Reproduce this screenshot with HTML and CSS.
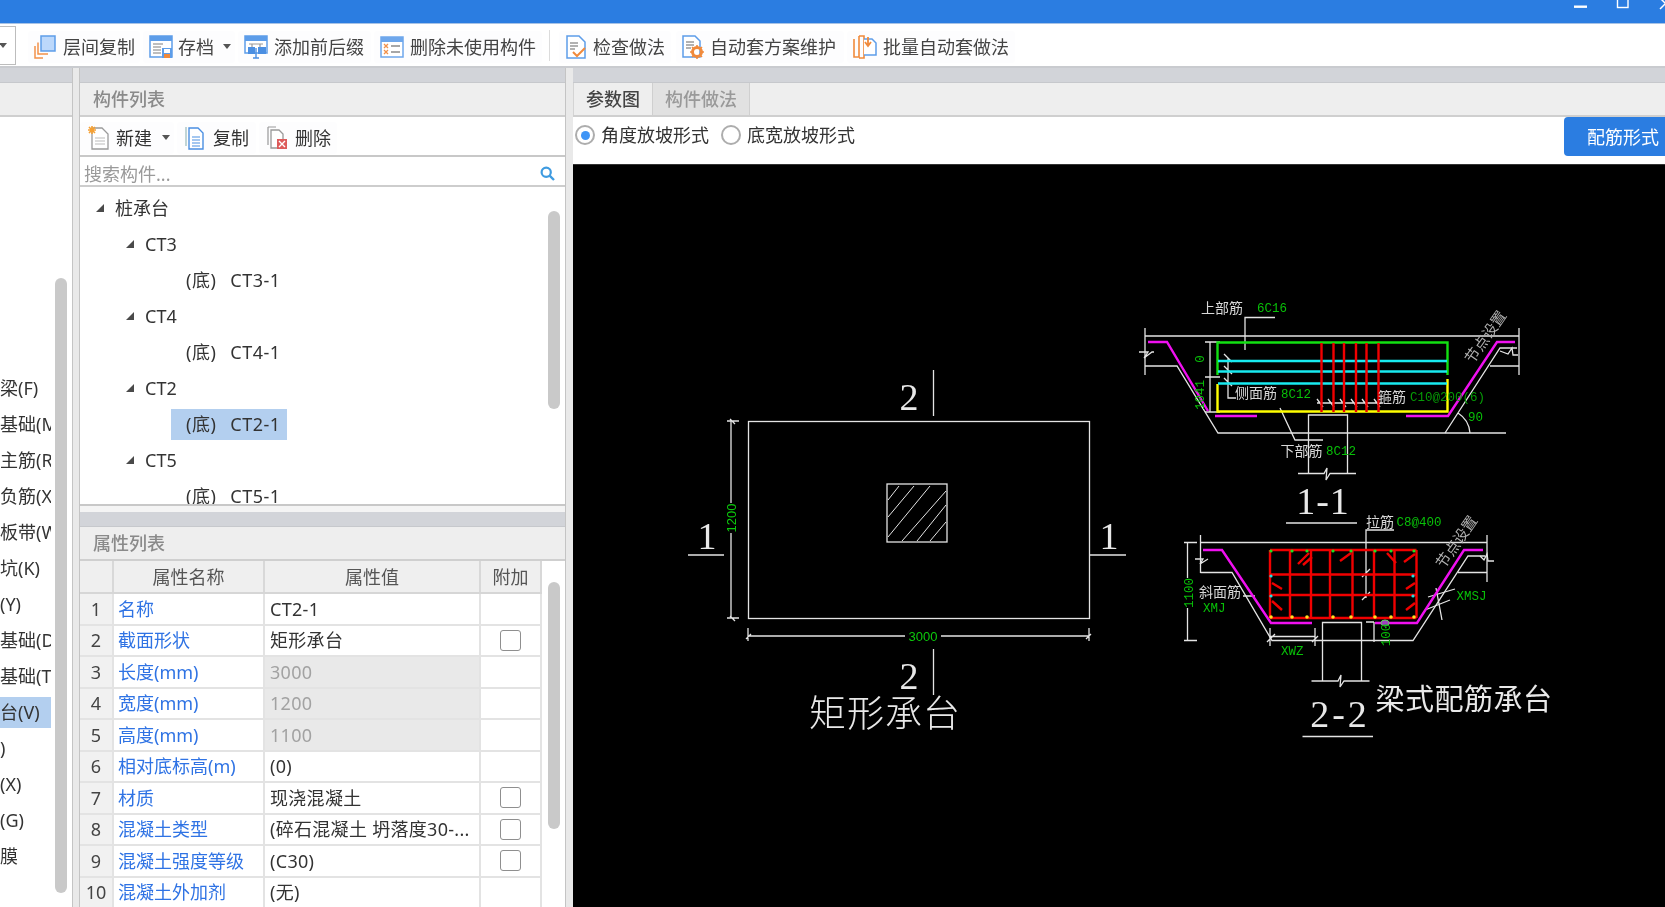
FILE: index.html
```html
<!DOCTYPE html>
<html lang="zh-CN">
<head>
<meta charset="utf-8">
<title>构件列表</title>
<link rel="stylesheet" href="styles.css">
</head>
<body>
<div class="app">
  <header class="titlebar">
    <svg class="winctl" width="100" height="23" viewBox="0 0 100 23">
      <rect x="9" y="5.5" width="13" height="2.4" fill="#fff"/>
      <rect x="52.5" y="-4" width="10.5" height="11.5" fill="none" stroke="#fff" stroke-width="1.4"/>
      <path d="M95 -2L106 9M106 -2L95 9" stroke="#fff" stroke-width="1.5" fill="none"/>
    </svg>
  </header>

  <nav class="toolbar">
    <div class="dropbox"><i class="caret"></i></div>
    <div class="tool tool-first">
      <svg class="ic22" viewBox="0 0 22 24"><path d="M4 7.5V19H14M1 11V23H9" fill="none" stroke="#f2914a" stroke-width="1.5"/><rect x="7" y="1" width="14" height="15" fill="#bcd8fb" stroke="#5d9de9" stroke-width="1.5"/></svg>
      <span>层间复制</span>
    </div>
    <div class="tool tool-save">
      <svg class="ic24" viewBox="0 0 24 24"><rect x="1" y="1" width="22" height="21" fill="#fff" stroke="#5d9de9" stroke-width="1.5"/><rect x="1" y="1" width="22" height="5" fill="#5d9de9"/><path d="M4 9h10M4 12h8M4 15h8M4 18h8" stroke="#a9a9a9" stroke-width="1.3"/><rect x="13" y="13" width="10" height="10" fill="#5d9de9"/><rect x="15" y="14" width="6" height="4" fill="#fff"/><rect x="15" y="19" width="6" height="4" fill="#f08a3c"/></svg>
      <span>存档</span><i class="caret caret-tool"></i>
    </div>
    <div class="tool tool-prefix">
      <svg class="ic24" viewBox="0 0 24 24"><rect x="1" y="1" width="22" height="17" fill="#fff" stroke="#5d9de9" stroke-width="1.5"/><rect x="1" y="1" width="22" height="5" fill="#5d9de9"/><path d="M5 9h14M8 9v3M16 9v3" stroke="#9a9a9a" stroke-width="1.2"/><rect x="4" y="12" width="7" height="7" fill="#4b8fe2"/><rect x="14" y="12" width="8" height="7" fill="#4b8fe2"/><path d="M12 13v10M9 23h6" stroke="#4b8fe2" stroke-width="1.4"/></svg>
      <span>添加前后缀</span>
    </div>
    <div class="tool">
      <svg class="ic24" viewBox="0 0 24 24"><rect x="1" y="2" width="22" height="20" fill="#fff" stroke="#6ea7ec" stroke-width="1.5"/><rect x="1" y="2" width="22" height="5" fill="#6ea7ec"/><path d="M4 9l4 4M8 9l-4 4M4 15l4 4M8 15l-4 4" stroke="#f2914a" stroke-width="1.3"/><path d="M11 11h9M11 17h9" stroke="#8a8a8a" stroke-width="1.3"/></svg>
      <span>删除未使用构件</span>
    </div>
    <div class="toolsep"></div>
    <div class="tool">
      <svg class="ic22" viewBox="0 0 22 24"><path d="M2 1H14L20 7V23H2Z" fill="#fff" stroke="#5d9de9" stroke-width="1.5"/><path d="M5 8h8M5 11h8M5 14h5" stroke="#999" stroke-width="1.3"/><path d="M8 17l4 4 8-8" fill="none" stroke="#f08a3c" stroke-width="2"/></svg>
      <span>检查做法</span>
    </div>
    <div class="tool tool-shift">
      <svg class="ic22" viewBox="0 0 22 24"><path d="M1 1H13L18 6V22H1Z" fill="#fff" stroke="#5d9de9" stroke-width="1.5"/><path d="M4 7h8M4 10h8M4 13h5" stroke="#999" stroke-width="1.3"/><circle cx="15" cy="17" r="4.5" fill="none" stroke="#f08a3c" stroke-width="3"/><path d="M15 10v3M15 21v3M8 17h3M19 17h3M10 12l2 2M18 20l2 2M20 12l-2 2M10 22l2-2" stroke="#f08a3c" stroke-width="1.6"/></svg>
      <span>自动套方案维护</span>
    </div>
    <div class="tool">
      <svg class="ic24" viewBox="0 0 24 24"><path d="M6 1V22H1V4M6 1H11V23H6" fill="none" stroke="#f08a3c" stroke-width="1.6"/><path d="M11 4H19L23 8V20H11" fill="#fff" stroke="#5d9de9" stroke-width="1.5"/><path d="M15 2v8M12 7l3 4 3-4" fill="none" stroke="#f08a3c" stroke-width="1.8"/></svg>
      <span>批量自动套做法</span>
    </div>
  </nav>

  <main class="workspace">
    <aside class="nav">
      <div class="strip"></div>
      <div class="panel-head"></div>
      <div class="nav-body">
        <ul class="nav-list">
          <li>梁(F)</li>
          <li>基础(M)</li>
          <li>主筋(R)</li>
          <li>负筋(X)</li>
          <li>板带(W)</li>
          <li>坑(K)</li>
          <li>(Y)</li>
          <li>基础(D)</li>
          <li>基础(T)</li>
          <li class="nav-active">台(V)</li>
          <li>)</li>
          <li>(X)</li>
          <li>(G)</li>
          <li>膜</li>
        </ul>
        <div class="nav-scroll"></div>
      </div>
    </aside>
    <div class="splitter"></div>

    <section class="mid">
      <div class="strip"></div>
      <div class="panel-head"><span class="head-title">构件列表</span></div>
      <div class="mini-tools">
        <div class="mini mini-new">
          <svg class="ic21" viewBox="0 0 21 24"><path d="M4 2H14L20 8V23H4Z" fill="#fff" stroke="#9b9b9b" stroke-width="1.3"/><path d="M7 12h10M7 15h10M7 18h10" stroke="#bbb" stroke-width="1.2"/><path d="M4 0v8M0 4h8M1 1l6 6M7 1L1 7" stroke="#f5a033" stroke-width="1.6"/></svg>
          <span>新建</span><i class="caret caret-mini"></i>
        </div>
        <div class="mini mini-copy">
          <svg class="ic19" viewBox="0 0 19 24"><path d="M1 1V20" stroke="#9bb" stroke-width="1.2"/><path d="M4 2H13L18 7V23H4Z" fill="#fff" stroke="#4b8fe2" stroke-width="1.4"/><path d="M7 11h8M7 14h8M7 17h8M7 20h8" stroke="#4b8fe2" stroke-width="1.2"/></svg>
          <span>复制</span>
        </div>
        <div class="mini">
          <svg class="ic20" viewBox="0 0 20 24"><path d="M1 1H9M1 1V19" stroke="#999" stroke-width="1.2" fill="none"/><path d="M4 4H12L16 8V22H4Z" fill="#fff" stroke="#999" stroke-width="1.3"/><rect x="10" y="13" width="10" height="10" fill="#dd5b5b"/><path d="M12 15l6 6M18 15l-6 6" stroke="#fff" stroke-width="1.4"/></svg>
          <span>删除</span>
        </div>
      </div>
      <div class="search">
        <span class="search-text">搜索构件...</span>
        <svg class="search-ic" width="15" height="15" viewBox="0 0 15 15"><circle cx="6.2" cy="6.2" r="4.6" fill="none" stroke="#3f9be0" stroke-width="2.2"/><path d="M9.6 9.6L14 14" stroke="#3f9be0" stroke-width="2.4"/></svg>
      </div>
      <div class="tree">
        <div class="row lvl0"><i class="tri"></i><span>桩承台</span></div>
        <div class="row lvl1"><i class="tri"></i><span>CT3</span></div>
        <div class="row lvl2"><span class="leaf"><span>(底)</span><span>CT3-1</span></span></div>
        <div class="row lvl1"><i class="tri"></i><span>CT4</span></div>
        <div class="row lvl2"><span class="leaf"><span>(底)</span><span>CT4-1</span></span></div>
        <div class="row lvl1"><i class="tri"></i><span>CT2</span></div>
        <div class="row lvl2"><span class="leaf leaf-on"><span>(底)</span><span>CT2-1</span></span></div>
        <div class="row lvl1"><i class="tri"></i><span>CT5</span></div>
        <div class="row lvl2"><span class="leaf"><span>(底)</span><span>CT5-1</span></span></div>
        <div class="scroll scroll-tree"></div>
      </div>
      <div class="mid-gap"></div>
      <div class="strip strip-b"></div>
      <div class="panel-head"><span class="head-title">属性列表</span></div>
      <div class="props">
        <div class="prow phead"><div>&nbsp;</div><div>属性名称</div><div>属性值</div><div>附加</div></div>
        <div class="prow"><div class="idx">1</div><div class="pname">名称</div><div class="pval">CT2-1</div><div></div></div>
        <div class="prow"><div class="idx">2</div><div class="pname">截面形状</div><div class="pval">矩形承台</div><div class="padd"><i class="chk"></i></div></div>
        <div class="prow"><div class="idx">3</div><div class="pname">长度(mm)</div><div class="pval ro">3000</div><div></div></div>
        <div class="prow"><div class="idx">4</div><div class="pname">宽度(mm)</div><div class="pval ro">1200</div><div></div></div>
        <div class="prow"><div class="idx">5</div><div class="pname">高度(mm)</div><div class="pval ro">1100</div><div></div></div>
        <div class="prow"><div class="idx">6</div><div class="pname">相对底标高(m)</div><div class="pval">(0)</div><div></div></div>
        <div class="prow"><div class="idx">7</div><div class="pname">材质</div><div class="pval">现浇混凝土</div><div class="padd"><i class="chk"></i></div></div>
        <div class="prow"><div class="idx">8</div><div class="pname">混凝土类型</div><div class="pval">(碎石混凝土 坍落度30-...</div><div class="padd"><i class="chk"></i></div></div>
        <div class="prow"><div class="idx">9</div><div class="pname">混凝土强度等级</div><div class="pval">(C30)</div><div class="padd"><i class="chk"></i></div></div>
        <div class="prow"><div class="idx">10</div><div class="pname">混凝土外加剂</div><div class="pval">(无)</div><div></div></div>
        <div class="scroll scroll-props"></div>
      </div>
    </section>
    <div class="splitter splitter-r"></div>

    <section class="right">
      <div class="strip"></div>
      <div class="tabs">
        <div class="tab tab-on">参数图</div>
        <div class="tab">构件做法</div>
      </div>
      <div class="options">
        <label class="opt"><i class="radio radio-on"></i><span>角度放坡形式</span></label>
        <label class="opt"><i class="radio"></i><span>底宽放坡形式</span></label>
        <div class="rebar-btn">配筋形式</div>
      </div>
      <div class="canvas">
        <svg class="drawing" width="1092" height="743" viewBox="573 164 1092 743">
          <!-- plan -->
          <g class="w">
            <rect x="748.500" y="421.500" width="341" height="197"/>
            <rect x="887" y="484" width="60" height="58"/>
            <path class="thin" d="M888 500L899 486M888 517L914 486M888 537L930 486M902 541L946 491M917 541L946 505M930 541L946 522"/>
            <path d="M933.500 370V416M933.500 649V695M688 555H724M1090 555H1126"/>
            <path d="M731 421V503M731 533V618M727 421H739M727 618H739M730 419l5 5M730 616l5 5"/>
            <path d="M748 636H905M941 636H1089M748 628V641M1089 628V641M746 639l5-5M1086 639l5-5"/>
          </g>
          <text class="big" x="909" y="410" text-anchor="middle">2</text>
          <text class="big" x="909" y="689" text-anchor="middle">2</text>
          <text class="big" x="707" y="549" text-anchor="middle">1</text>
          <text class="big" x="1109" y="549" text-anchor="middle">1</text>
          <text class="dim" transform="translate(736 518) rotate(-90)" text-anchor="middle">1200</text>
          <text class="dim" x="923" y="641" text-anchor="middle">3000</text>
          <text class="caption" x="885" y="727" text-anchor="middle">矩形承台</text>

          <!-- section 1-1 -->
          <g class="w">
            <path d="M1145 336H1519M1145 328V375M1519 328V375"/>
            <path d="M1145 366H1177L1218 433H1506"/>
            <path d="M1445 433L1500 348H1517M1490 366H1519M1458 413Q1469 420 1470 433"/>
            <path d="M1139 352H1148L1144 358L1152 352H1154M1500 351l8 3 4-6 1 7h5"/>
            <path d="M1245 350V317.500H1275"/>
            <path d="M1210 342V412M1205 342H1220M1205 377H1220M1205 412H1220"/>
            <path d="M1228 358V398H1236M1224 354l8 8M1224 366l8 8M1224 378l8 8"/>
            <path d="M1317 403H1383M1317 399l6 8M1328 399l6 8M1340 399l6 8M1351 399l6 8M1362 399l6 8M1374 399l6 8"/>
            <path d="M1280 408L1295 440H1323"/>
            <path d="M1308.500 473V415H1347.500V473M1298 473.500H1324L1327 468L1326 480L1330 473.500H1356"/>
            <path d="M1286 523H1357"/>
          </g>
          <path class="mg" d="M1148 342H1167L1208 411M1215 416H1257M1406 416H1448L1497 342H1515"/>
          <path class="gn" d="M1217.500 375V342.500H1447.500V375"/>
          <path class="yl" d="M1217.500 384V411.500H1447.500V379"/>
          <path class="cy" d="M1218 361H1447M1218 371.500H1447M1218 383.500H1447"/>
          <path class="rd" d="M1321.500 343V412M1333.500 343V412M1344 343V412M1356 343V412M1366.500 343V412M1378.500 343V412"/>
          <text class="lab" x="1201" y="313">上部筋</text>
          <text class="code" x="1257" y="312">6C16</text>
          <text class="code" transform="translate(1204 359) rotate(-90)" text-anchor="middle">0</text>
          <text class="code" transform="translate(1204 395) rotate(-90)" text-anchor="middle">1041</text>
          <text class="lab" x="1235" y="398">侧面筋</text>
          <text class="code" x="1281" y="398">8C12</text>
          <text class="lab" x="1378" y="402">箍筋</text>
          <text class="code code-dim" x="1410" y="401">C10@200(6)</text>
          <text class="code" x="1468" y="421">90</text>
          <text class="lab" x="1280.500" y="456">下部筋</text>
          <text class="code" x="1326" y="455">8C12</text>
          <text class="lab lab-set" transform="translate(1490 340) rotate(-55)" text-anchor="middle">节点设置</text>
          <text class="big big-sec" x="1323" y="514" text-anchor="middle">1-1</text>

          <!-- section 2-2 -->
          <g class="w">
            <path d="M1200.500 542.500H1487M1200.500 535V573M1487 535V582"/>
            <path d="M1200.500 572.500H1232L1272 640.500H1413L1468 556H1485M1458 572.500H1487"/>
            <path d="M1195 559H1203L1200 564L1208 559M1480 556l4 4 3-6 1 7h6"/>
            <path d="M1187.500 542.500V578M1187.500 608V640.500M1184 542.500H1197M1184 640.500H1197"/>
            <path d="M1243 596H1255M1366 598V530H1394M1362 577l8-8M1362 600l8-8"/>
            <path d="M1270 636.500H1315M1270 628V646M1315 628V646M1267 642l8-8M1312 642l6-6"/>
            <path d="M1374 622V642M1366 622H1374"/>
            <path d="M1428 597L1455 589M1425 610L1450 600M1436 588L1442 620"/>
            <path d="M1322.500 681V622.500H1361.500V681M1311.500 681H1338L1341 675L1340 687L1344 681H1369.500"/>
            <path d="M1302.500 736.500H1373"/>
          </g>
          <path class="mg" d="M1203 550H1222L1271 623H1312M1375 623H1417L1464 550H1483"/>
          <path class="rd rd2" d="M1270 550V618M1290 550V618M1311 550V618M1330 550V618M1352.500 550V618M1374 550V618M1394.500 550V618M1416.500 550V618M1270 550H1416.500M1270 574.500H1416.500M1270 595H1416.500M1270 618H1416.500"/>
          <path class="rd" d="M1298 564l11-11M1303 565l9-8M1340 561l11-8M1387 553l9 10M1404 562l11-8M1272 583l10 6M1272 601l10 9M1415 583l-9 6M1415 603l-9 7"/>
          <g class="dots-g"><circle cx="1271" cy="551" r="1.600"/><circle cx="1292" cy="551" r="1.600"/><circle cx="1307" cy="551" r="1.600"/><circle cx="1333" cy="551" r="1.600"/><circle cx="1351" cy="551" r="1.600"/><circle cx="1375" cy="551" r="1.600"/><circle cx="1391" cy="551" r="1.600"/><circle cx="1414" cy="551" r="1.600"/></g>
          <g class="dots-y"><circle cx="1271" cy="617" r="1.800"/><circle cx="1292" cy="617" r="1.800"/><circle cx="1307" cy="617" r="1.800"/><circle cx="1333" cy="617" r="1.800"/><circle cx="1351" cy="617" r="1.800"/><circle cx="1375" cy="617" r="1.800"/><circle cx="1391" cy="617" r="1.800"/><circle cx="1414" cy="617" r="1.800"/></g>
          <g class="dots-c"><circle cx="1271" cy="576" r="1.600"/><circle cx="1271" cy="596" r="1.600"/><circle cx="1413" cy="576" r="1.600"/><circle cx="1413" cy="596" r="1.600"/></g>
          <ellipse class="mark" cx="1385" cy="623" rx="4" ry="3"/>
          <text class="code" transform="translate(1193 593) rotate(-90)" text-anchor="middle">1100</text>
          <text class="lab" x="1199" y="597">斜面筋</text>
          <text class="code" x="1203" y="612">XMJ</text>
          <text class="lab" x="1366" y="527">拉筋</text>
          <text class="code" x="1396.500" y="526">C8@400</text>
          <text class="code" x="1281" y="655">XWZ</text>
          <text class="code" x="1456.500" y="600">XMSJ</text>
          <text class="code" transform="translate(1390 635) rotate(-90)" text-anchor="middle">100</text>
          <text class="lab lab-set" transform="translate(1461 545) rotate(-55)" text-anchor="middle">节点设置</text>
          <text class="big big-sec big-wide" x="1340" y="727" text-anchor="middle">2-2</text>
          <text class="caption caption-b" x="1464" y="710" text-anchor="middle">梁式配筋承台</text>
        </svg>
      </div>
    </section>
  </main>
</div>
</body>
</html>
```

FILE: styles.css
```css
* { box-sizing: border-box; }
html, body { margin: 0; height: 100%; overflow: hidden; background: #fff; }
body {
  font-family: "Noto Sans", "Noto Sans CJK SC", sans-serif;
  font-size: 18px;
  color: #333;
  line-height: 1;
}
i { display: block; font-style: normal; }
ul { list-style: none; margin: 0; padding: 0; }

.app { width: 1665px; height: 907px; display: flex; flex-direction: column; overflow: hidden; filter: blur(0.35px); }

.titlebar { height: 24px; flex: none; background: #2b7de1; border-bottom: 1px solid #a7c3e6; display: flex; justify-content: flex-end; overflow: hidden; }
.winctl { display: block; }

.toolbar { height: 44px; flex: none; background: #fff; display: flex; align-items: center; gap: 3px; border-bottom: 2px solid #c9cbcf; padding-top: 3px; }
.dropbox { width: 16px; height: 39px; margin-top: -3px; flex: none; border: 1px solid #bdbdbd; border-left: 0; display: flex; align-items: center; margin-right: 3px; }
.caret { width: 0; height: 0; border-left: 4px solid transparent; border-right: 4px solid transparent; border-top: 5px solid #555; }
.dropbox .caret { margin-left: -1px; }
.toolsep { width: 1px; height: 31px; background: #dcdcdc; margin: -3px 6px 0 4px; flex: none; }
.tool { height: 32px; display: flex; align-items: center; gap: 6px; padding: 0 6px; flex: none; border-radius: 3px; background: #fdfdfe; white-space: nowrap; color: #444; }
.tool-first { margin-left: 6px; gap: 7px; padding-right: 5px; }
.tool-save { gap: 5px; padding-right: 4px; }
.tool-prefix { padding-right: 7px; }
.tool-shift { margin-left: 2px; padding-right: 8px; }
.caret-tool { margin-left: 4px; }
.ic22 { width: 22px; height: 24px; flex: none; }
.ic24 { width: 24px; height: 24px; flex: none; }
.ic21 { width: 21px; height: 24px; flex: none; }
.ic20 { width: 20px; height: 24px; flex: none; }
.ic19 { width: 19px; height: 24px; flex: none; }

.workspace { flex: 1; display: flex; min-height: 0; background: #fff; }
.strip { height: 15px; flex: none; background: #d2d4d9; border-bottom: 1px solid #c6c8cc; }
.panel-head { height: 34px; flex: none; background: #eee; border-bottom: 2px solid #cfcfcf; display: flex; align-items: center; padding-left: 13px; }
.head-title { color: #8a8a8a; font-weight: 500; }

.nav { width: 73px; flex: none; display: flex; flex-direction: column; border-right: 1px solid #c4c4c4; }
.nav-body { flex: 1; display: flex; min-height: 0; overflow: hidden; }
.nav-list { width: 51px; flex: none; padding-top: 253px; }
.nav-list li { height: 36px; display: flex; align-items: center; white-space: nowrap; overflow: hidden; }
.nav-list .nav-active { height: 31px; margin: 2.5px 0; background: #b3cfef; }
.nav-scroll { width: 12px; height: 615px; margin: 161px 0 0 4px; background: #c9c9c9; border-radius: 6px; flex: none; }

.splitter { width: 6px; flex: none; background: #e9e9e9; }
.splitter-r { width: 7px; }

.mid { width: 487px; flex: none; display: flex; flex-direction: column; border-left: 1px solid #c4c4c4; border-right: 1px solid #c4c4c4; min-height: 0; }
.mini-tools { height: 40px; flex: none; display: flex; align-items: center; gap: 3px; border-bottom: 2px solid #c8c8c8; padding-top: 3px; }
.mini { height: 32px; display: flex; align-items: center; gap: 8px; padding: 0 6px 0 8px; flex: none; background: #fdfdfe; border-radius: 3px; }
.mini-new { gap: 7px; padding-right: 4px; }
.mini-copy { gap: 9px; padding-right: 7px; }
.caret-mini { margin-left: 3px; }
.search { height: 30px; flex: none; display: flex; align-items: center; justify-content: space-between; padding: 5px 10px 0 4px; border-bottom: 2px solid #cdcdcd; }
.search-text { color: #9a9a9a; }
.search-ic { flex: none; }

.tree { height: 319px; flex: none; position: relative; overflow: hidden; border-bottom: 2px solid #c8c8c8; padding-top: 3px; }
.row { height: 36px; display: flex; align-items: center; gap: 11px; white-space: nowrap; }
.tri { width: 0; height: 0; border-left: 8px solid transparent; border-bottom: 8px solid #4a4a4a; flex: none; }
.lvl0 { padding-left: 16px; }
.lvl1 { padding-left: 46px; }
.lvl2 { padding-left: 91px; }
.leaf { height: 31px; display: flex; align-items: center; gap: 14px; padding: 0 7px 0 15px; width: 116px; letter-spacing: 0.5px; }
.leaf-on { background: #b3cfef; }
.scroll { position: absolute; width: 12px; background: #c9c9c9; border-radius: 6px; right: 5px; }
.scroll-tree { top: 24px; height: 198px; }

.mid-gap { height: 6px; flex: none; background: #f4f4f4; }
.strip-b { height: 15px; }
.props { flex: 1; min-height: 0; position: relative; overflow: hidden; }
.prow { width: 462px; height: 31.5px; display: grid; grid-template-columns: 34px 151px 216px 61px; border-bottom: 2px solid #e3e3e3; background: #fff; }
.prow > div { display: flex; align-items: center; border-right: 2px solid #e3e3e3; white-space: nowrap; overflow: hidden; }
.phead { height: 33px; background: #efefef; border-bottom-color: #d6d6d6; color: #555; }
.phead > div { justify-content: center; border-right-color: #d8d8d8; }
.idx { justify-content: center; background: #f1f1f1; color: #444; }
.pname { color: #2f73e4; padding-left: 4px; }
.pval { padding-left: 5px; color: #333; letter-spacing: 0.3px; }
.ro { background: #e9e9e9; color: #a2a2a2; }
.padd { justify-content: center; }
.chk { width: 21px; height: 21px; border: 1.5px solid #8f8f8f; border-radius: 3px; background: #fff; }
.scroll-props { top: 21px; height: 247px; }

.right { flex: 1; min-width: 0; display: flex; flex-direction: column; }
.tabs { height: 34px; flex: none; display: flex; background: #eee; border-bottom: 2px solid #cfcfcf; }
.tab { width: 97px; background: #e1e1e1; color: #999; font-weight: 500; display: flex; align-items: center; justify-content: center; border-right: 1px solid #cfcfcf; }
.tab-on { width: 80px; background: #eee; color: #444; border-left: 1px solid #d4d4d4; }
.options { height: 47px; flex: none; display: flex; align-items: flex-start; gap: 12px; padding: 0 0 0 2px; }
.opt { display: flex; align-items: center; gap: 6px; height: 36px; white-space: nowrap; }
.opt span { margin-top: -1px; }
.radio { width: 20px; height: 20px; border: 2px solid #adadad; border-radius: 50%; background: #fff; display: flex; align-items: center; justify-content: center; flex: none; }
.radio-on::after { content: ""; width: 9px; height: 9px; border-radius: 50%; background: #3f95f6; }
.rebar-btn { margin-left: auto; width: 101px; height: 39px; background: #2b7de1; color: #fff; border-radius: 4px 0 0 4px; display: flex; align-items: center; padding-left: 23px; white-space: nowrap; overflow: hidden; }

.canvas { flex: 1; min-height: 0; background: #000; overflow: hidden; border-top: 1px solid #333; }
.drawing { display: block; margin-top: -1px; }
.drawing path, .drawing rect { fill: none; }
.w { stroke: #e4e4e4; stroke-width: 1.3; fill: none; }
.thin { stroke-width: 1; }
.mg { stroke: #f010f0; stroke-width: 2.4; }
.gn { stroke: #12e012; stroke-width: 2.4; }
.yl { stroke: #ffff00; stroke-width: 2.4; }
.cy { stroke: #18eaf0; stroke-width: 2.4; }
.rd { stroke: #f00000; stroke-width: 2.4; }
.rd2 { stroke-width: 2.4; }
.dots-g { fill: #20e020; }
.dots-y { fill: #ffe020; }
.dots-c { fill: #20e0e0; }
.mark { fill: #a040c0; stroke: #60d060; stroke-width: 1; }
.big { font-family: "Liberation Serif", serif; font-size: 38px; fill: #e8e8e8; }
.big-sec { letter-spacing: 1px; }
.big-wide { letter-spacing: 3px; }
.caption { font-family: "Noto Sans CJK SC", sans-serif; font-size: 37px; font-weight: 300; fill: #e8e8e8; letter-spacing: 1px; }
.caption-b { font-size: 29px; font-weight: 400; letter-spacing: 0.5px; }
.dim { font-family: "Liberation Sans", sans-serif; font-size: 13px; fill: #0cc80c; }
.lab { font-family: "Noto Sans CJK SC", sans-serif; font-size: 14px; fill: #d8d8d8; }
.lab-set { font-size: 15px; fill: #b0b0b0; }
.code { font-family: "Liberation Mono", monospace; font-size: 12.5px; fill: #08c008; }
.code-dim { fill: #069a06; }
```
